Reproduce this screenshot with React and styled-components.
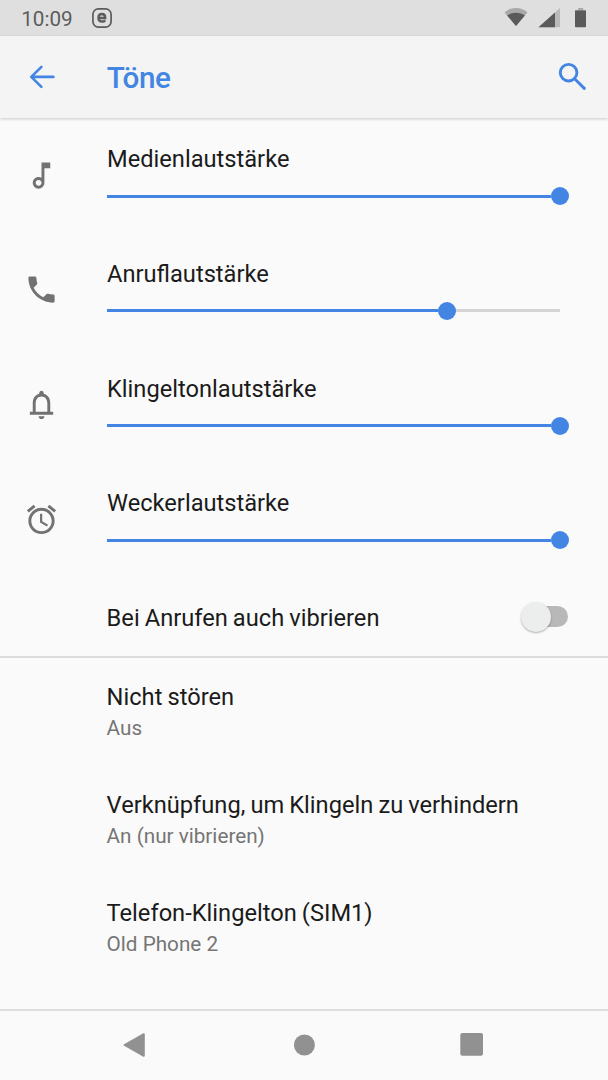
import React from "react";
import styled, { createGlobalStyle } from "styled-components";

const BLUE = "#4285e2";

const GlobalStyle = createGlobalStyle`
  *, *::before, *::after { box-sizing: border-box; }
  html, body { margin: 0; padding: 0; background: #fafafa; }
  body { font-family: Roboto, "Noto Sans", sans-serif; overflow: hidden; }
`;

const Screen = styled.div`
  width: 608px;
  height: 1080px;
  display: flex;
  flex-direction: column;
  background: #fafafa;
  color: #1b1b1b;
`;

const StatusBar = styled.div`
  flex: none;
  height: 35.5px;
  display: flex;
  align-items: center;
  padding: 0 21px 0 21.2px;
  background: #dfdfdf;
`;

const Clock = styled.span`
  font-size: 20.7px;
  line-height: 24px;
  color: #5c5c5c;
  padding-top: 3px;
`;

const NotificationIcon = styled.svg`
  margin-left: 18.8px;
`;

const StatusIcons = styled.svg`
  margin-left: auto;
`;

const AppBar = styled.header`
  flex: none;
  height: 82.5px;
  display: flex;
  align-items: center;
  padding: 0 18px 0 23.7px;
  background: #f4f4f4;
  box-shadow: 0 1px 3px rgba(0, 0, 0, 0.2);
`;

const AppBarButton = styled.button`
  width: 36px;
  height: 36px;
  padding: 0;
  border: 0;
  background: none;
  display: flex;
`;

const AppTitle = styled.h1`
  flex: 1;
  margin: 0 0 0 47.1px;
  padding-top: 2px;
  font-size: 29.6px;
  line-height: 34px;
  font-weight: 500;
  letter-spacing: -0.35px;
  color: ${BLUE};
`;

const Content = styled.main`
  flex: 1;
  min-height: 0;
  padding-top: 0.5px;
  overflow: hidden;
`;

const VolumeRow = styled.div`
  height: 114.75px;
  display: flex;
`;

const IconColumn = styled.div`
  width: 107px;
  padding: 39px 0 0 24px;
`;

const RowIcon = styled.svg`
  display: block;
  width: 35px;
  height: 35px;
  fill: #727272;
`;

const VolumeBody = styled.div`
  width: 453.4px;
  padding-top: 26.5px;
`;

const ItemTitle = styled.div`
  font-size: 23.67px;
  line-height: 28px;
  word-spacing: -0.8px;
  white-space: nowrap;
`;

const Slider = styled.div`
  height: 18px;
  margin-top: 14px;
  display: flex;
  align-items: center;
`;

const SliderFill = styled.div`
  width: calc(${(p) => p.$value}% - 9px);
  height: 3px;
  background: ${BLUE};
`;

const SliderThumb = styled.div`
  flex: none;
  width: 18px;
  height: 18px;
  margin-right: -9px;
  border-radius: 50%;
  background: ${BLUE};
  z-index: 1;
`;

const SliderRest = styled.div`
  flex: 1;
  height: 3px;
  background: #d5d5d5;
`;

const SwitchRow = styled.div`
  height: 80.3px;
  display: flex;
  align-items: center;
  justify-content: space-between;
  padding: 2px 40.5px 0 106.6px;
  border-bottom: 2px solid #dcdcdc;
`;

const SwitchTrack = styled.div`
  width: 45px;
  height: 21px;
  margin-top: -2px;
  border-radius: 11px;
  display: flex;
  align-items: center;
  background: #b8b8b8;
`;

const SwitchThumb = styled.div`
  width: 30px;
  height: 30px;
  margin-left: -2px;
  border-radius: 50%;
  background: #eceeed;
  box-shadow: 0 1px 2px rgba(0, 0, 0, 0.3);
`;

const SettingItem = styled.div`
  height: 108px;
  padding: 25px 24px 0 106.6px;
`;

const ItemSummary = styled.div`
  margin-top: 5px;
  font-size: 20.7px;
  line-height: 24px;
  color: #757575;
`;

const NavBar = styled.nav`
  flex: none;
  height: 71px;
  display: flex;
  align-items: center;
  justify-content: space-between;
  padding: 0 125px 2px 123px;
  border-top: 2px solid #dedede;
`;

const NavButton = styled.button`
  padding: 0;
  border: 0;
  background: none;
  display: flex;
  color: #919191;
`;

const volumes = [
  {
    label: "Medienlautstärke",
    value: 100,
    path: "M12 3l.01 10.55c-.59-.34-1.27-.55-2-.55C7.79 13 6 14.79 6 17s1.79 4 4.01 4S14 19.21 14 17V7h4V3h-6zm-1.99 16c-1.1 0-2-.9-2-2s.9-2 2-2 2 .9 2 2-.9 2-2 2z",
  },
  {
    label: "Anruflautstärke",
    value: 75,
    path: "M6.62 10.79c1.44 2.83 3.76 5.14 6.59 6.59l2.2-2.2c.27-.27.67-.36 1.02-.24 1.12.37 2.33.57 3.57.57.55 0 1 .45 1 1V20c0 .55-.45 1-1 1-9.39 0-17-7.61-17-17 0-.55.45-1 1-1h3.5c.55 0 1 .45 1 1 0 1.25.2 2.45.57 3.57.11.35.03.74-.25 1.02l-2.2 2.2z",
  },
  {
    label: "Klingeltonlautstärke",
    value: 100,
    path: "M18 17v-6c0-3.07-1.63-5.64-4.5-6.32V4c0-.83-.67-1.5-1.5-1.5s-1.5.67-1.5 1.5v.68C7.64 5.36 6 7.92 6 11v6H4v2h16v-2h-2zm-2 0H8v-6c0-2.48 1.51-4.5 4-4.5s4 2.02 4 4.5v6zm-4 5c1.1 0 2-.9 2-2h-4c0 1.1.9 2 2 2z",
  },
  {
    label: "Weckerlautstärke",
    value: 100,
    path: "M22 5.72l-4.6-3.86-1.29 1.53 4.6 3.86L22 5.72zM7.88 3.39L6.6 1.86 2 5.71l1.29 1.53 4.59-3.85zM12.5 8H11v6l4.75 2.85.75-1.23-4-2.37V8zM12 4c-4.97 0-9 4.03-9 9s4.02 9 9 9c4.97 0 9-4.03 9-9s-4.03-9-9-9zm0 16c-3.87 0-7-3.13-7-7s3.13-7 7-7 7 3.13 7 7-3.13 7-7 7z",
  },
];

const settings = [
  { title: "Nicht stören", summary: "Aus" },
  { title: "Verknüpfung, um Klingeln zu verhindern", summary: "An (nur vibrieren)" },
  { title: "Telefon-Klingelton (SIM1)", summary: "Old Phone 2" },
];

export default function App() {
  return (
    <>
      <GlobalStyle />
      <Screen>
        <StatusBar>
          <Clock>10:09</Clock>
          <NotificationIcon width="20" height="20" viewBox="0 0 20 20" fill="none" stroke="#5c5c5c">
            <rect x="0.9" y="0.9" width="18.2" height="18.2" rx="5.5" strokeWidth="1.7" />
            <path d="M6.4 9.9H13.2C13.2 7.4 12 6.1 10 6.1C7.8 6.1 6.5 7.5 6.5 9.8C6.5 12.3 7.8 13.6 10.2 13.6C11.4 13.6 12.5 13.1 13.2 12.2" strokeWidth="2.5" />
          </NotificationIcon>
          <StatusIcons width="83" height="20" viewBox="0 0 83 20">
            <path d="M0.5 4.4C3.6 1.6 7.5 0 12 0S20.4 1.6 23.5 4.4L12 18Z" fill="#a9a9a9" />
            <path d="M3.2 7.6C5.7 5.6 8.7 4.7 12 4.7S18.3 5.6 20.8 7.6L12 18Z" fill="#5a5a5a" />
            <path d="M34.5 19.2L56 0V19.2Z" fill="#bababa" />
            <path d="M34.5 19.2L51 4.5V19.2Z" fill="#5a5a5a" />
            <path d="M74.2 0H79.2V2H82V6H71V2H74.2Z" fill="#a9a9a9" />
            <rect x="71" y="2.6" width="11" height="16.6" rx="0.8" fill="#5a5a5a" />
          </StatusIcons>
        </StatusBar>

        <AppBar>
          <AppBarButton aria-label="Zurück">
            <svg width="36" height="36" viewBox="0 0 36 36" fill="none" stroke={BLUE} strokeWidth="2.6" strokeLinecap="round" strokeLinejoin="round">
              <path d="M29.4 17.9H7.3M17.4 7.9L7.3 17.9L17.4 27.9" />
            </svg>
          </AppBarButton>
          <AppTitle>Töne</AppTitle>
          <AppBarButton aria-label="Suchen">
            <svg width="36" height="36" viewBox="0 0 36 36" fill="none" stroke={BLUE} strokeWidth="2.9">
              <circle cx="14.6" cy="13.7" r="8.3" />
              <path d="M20.6 19.7L30.3 29.4" strokeLinecap="round" />
            </svg>
          </AppBarButton>
        </AppBar>

        <Content>
          {volumes.map((v) => (
            <VolumeRow key={v.label}>
              <IconColumn>
                <RowIcon viewBox="0 0 24 24">
                  <path d={v.path} />
                </RowIcon>
              </IconColumn>
              <VolumeBody>
                <ItemTitle>{v.label}</ItemTitle>
                <Slider>
                  <SliderFill $value={v.value} />
                  <SliderThumb />
                  <SliderRest />
                </Slider>
              </VolumeBody>
            </VolumeRow>
          ))}
          <SwitchRow>
            <ItemTitle>Bei Anrufen auch vibrieren</ItemTitle>
            <SwitchTrack>
              <SwitchThumb />
            </SwitchTrack>
          </SwitchRow>
          {settings.map((s) => (
            <SettingItem key={s.title}>
              <ItemTitle>{s.title}</ItemTitle>
              <ItemSummary>{s.summary}</ItemSummary>
            </SettingItem>
          ))}
        </Content>

        <NavBar>
          <NavButton aria-label="Zurück">
            <svg width="22" height="24" viewBox="0 0 22 24" fill="currentColor" stroke="currentColor" strokeWidth="2" strokeLinejoin="round">
              <path d="M20.8 1.2V22.8L1.6 12Z" />
            </svg>
          </NavButton>
          <NavButton aria-label="Startbildschirm">
            <svg width="24" height="22" viewBox="0 0 24 22" fill="currentColor">
              <circle cx="13.4" cy="11" r="10.5" />
            </svg>
          </NavButton>
          <NavButton aria-label="Übersicht">
            <svg width="23" height="23" viewBox="0 0 23 23" fill="currentColor">
              <rect width="22.7" height="22.7" x="0.3" rx="2" />
            </svg>
          </NavButton>
        </NavBar>
      </Screen>
    </>
  );
}
